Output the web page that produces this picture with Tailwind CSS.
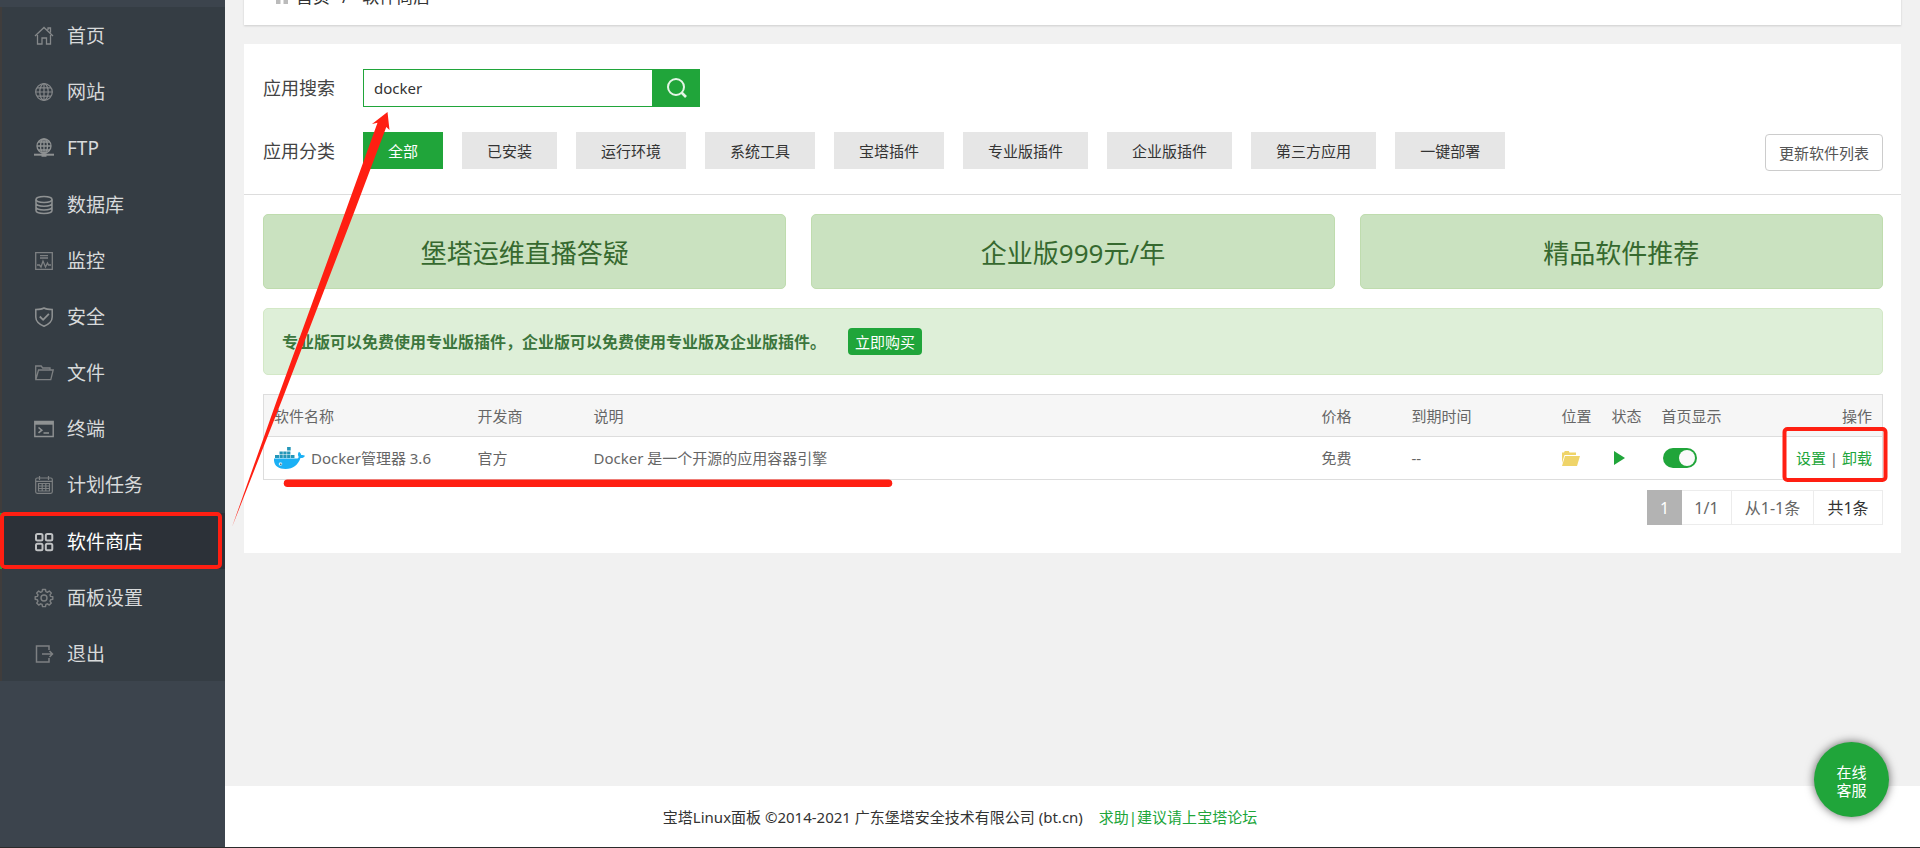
<!DOCTYPE html>
<html lang="zh-CN">
<head>
<meta charset="utf-8">
<meta name="viewport" content="width=device-width, initial-scale=1">
<title>软件商店 - 宝塔Linux面板</title>
<script src="https://cdn.jsdelivr.net/npm/@tailwindcss/browser@4"></script>
</head>
<body class="relative flex min-h-screen flex-col overflow-x-hidden bg-[#f1f1f1] font-['Noto_Sans','Noto_Sans_CJK_SC',sans-serif] text-[15px] leading-5 text-[#333]">
<div class="flex flex-1">
  <!-- Sidebar -->
  <aside class="w-[225px] shrink-0 bg-[#3c444d] pt-[7px]">
    <nav class="grid min-h-[674px] grid-rows-12 text-[19px] leading-6 text-[#d8dadb]">
      <a href="#" class="flex items-center gap-[13px] border-l-2 border-[#403d3c] bg-[#353d44] pt-0.5 pl-8">
        <svg class="size-5 text-[#85888a]" viewBox="0 0 20 20" fill="none" stroke="currentColor" stroke-width="1.3"><path d="M1 10 10 1.5 19 10M14 4V2h2.500v4.500M3.500 9v9H8v-6h4.500v6h4V9"/></svg>
        首页</a>
      <a href="#" class="flex items-center gap-[13px] border-l-2 border-[#403d3c] bg-[#353d44] pt-0.5 pl-8">
        <svg class="size-5 text-[#85888a]" viewBox="0 0 20 20" fill="none" stroke="currentColor" stroke-width="1.200"><circle cx="10" cy="10" r="8.300"/><ellipse cx="10" cy="10" rx="4.200" ry="8.300"/><path d="M10 1.700v16.600M1.700 10h16.600M3 5.800h14M3 14.200h14"/></svg>
        网站</a>
      <a href="#" class="flex items-center gap-[13px] border-l-2 border-[#403d3c] bg-[#353d44] pt-0.5 pl-8">
        <svg class="size-5 text-[#8f9293]" viewBox="0 0 20 20" fill="none" stroke="currentColor" stroke-width="1.300"><circle cx="10" cy="8" r="7"/><ellipse cx="10" cy="8" rx="3.500" ry="7"/><path d="M10 1v14M3 8h14M4.500 4h11M4.500 12h11"/><path d="M0 16.700h20" stroke-width="2"/><path d="M7.500 17h5" stroke-width="3.500"/></svg>
        FTP</a>
      <a href="#" class="flex items-center gap-[13px] border-l-2 border-[#403d3c] bg-[#353d44] pt-0.5 pl-8">
        <svg class="size-5 text-[#8f9293]" viewBox="0 0 20 20" fill="none" stroke="currentColor" stroke-width="1.500"><ellipse cx="10" cy="4.500" rx="8" ry="3"/><path d="M2 4.500v11c0 1.700 3.600 3 8 3s8-1.300 8-3v-11M2 8.200c0 1.700 3.600 3 8 3s8-1.300 8-3M2 12c0 1.700 3.600 3 8 3s8-1.300 8-3"/></svg>
        数据库</a>
      <a href="#" class="flex items-center gap-[13px] border-l-2 border-[#403d3c] bg-[#353d44] pt-0.5 pl-8">
        <svg class="size-5 text-[#7d8082]" viewBox="0 0 20 20" fill="none" stroke="currentColor" stroke-width="1.300"><path d="M1.700 1.700h16.600v16.600H1.700zM6 4.700h8M6 7h8M3 14h2.500l1.500 2 2-6 2.500 6 2-4 1 2H17"/></svg>
        监控</a>
      <a href="#" class="flex items-center gap-[13px] border-l-2 border-[#403d3c] bg-[#353d44] pt-0.5 pl-8">
        <svg class="size-5 text-[#8f9293]" viewBox="0 0 20 20" fill="none" stroke="currentColor" stroke-width="1.500"><path d="M10 1C7.500 2.500 4.500 2.500 1.800 2.500V10c0 4.500 4 7.500 8.200 9.300 4.200-1.800 8.200-4.800 8.200-9.300V2.500C15.500 2.500 12.500 2.500 10 1Z"/><path d="m5.800 9.500 3.300 3.300 5.800-6" stroke-width="1.800"/></svg>
        安全</a>
      <a href="#" class="flex items-center gap-[13px] border-l-2 border-[#403d3c] bg-[#353d44] pt-0.5 pl-8">
        <svg class="size-5 text-[#7d8082]" viewBox="0 0 20 20" fill="none" stroke="currentColor" stroke-width="1.300"><path d="M1.700 16.500V3h5.500l1.500 2H16v2M1.900 16.700 4.500 7h14.700l-2.400 9.700Z"/></svg>
        文件</a>
      <a href="#" class="flex items-center gap-[13px] border-l-2 border-[#403d3c] bg-[#353d44] pt-0.5 pl-8">
        <svg class="size-5 text-[#8f9293]" viewBox="0 0 20 20" fill="none" stroke="currentColor" stroke-width="1.400"><path d="M.8 2.500h18.400v15H.8z"/><path d="M.8 4h18.400" stroke-width="3.400"/><path d="m4.500 8.500 3.300 2.700-3.300 2.700M9.500 14H15" stroke-width="1.600"/></svg>
        终端</a>
      <a href="#" class="flex items-center gap-[13px] border-l-2 border-[#403d3c] bg-[#353d44] pt-0.5 pl-8">
        <svg class="size-5 text-[#7d8082]" viewBox="0 0 20 20" fill="none" stroke="currentColor" stroke-width="1.200"><rect x="1.700" y="3" width="16.600" height="15.300" rx="1.500"/><path d="M5.500 1v4M14.500 1v4M1.700 6.300h16.600M4.500 8.500h11v7.500h-11zM4.500 11h11M4.500 13.500h11M8.200 8.500V16M11.800 8.500V16"/></svg>
        计划任务</a>
      <a href="#" aria-current="page" class="flex items-center gap-[13px] border-l-2 border-[#20a53a] bg-[#2c3138] pt-0.5 pl-8 text-white">
        <svg class="size-5 text-[#bfc1c3]" viewBox="0 0 20 20" fill="none" stroke="currentColor" stroke-width="2"><rect x="2" y="2" width="6.500" height="6.500" rx="1.500"/><rect x="11.800" y="2" width="6.500" height="6.500" rx="1.500"/><rect x="2" y="11.800" width="6.500" height="6.500" rx="1.500"/><rect x="11.800" y="11.800" width="6.500" height="6.500" rx="1.500"/></svg>
        软件商店</a>
      <a href="#" class="flex items-center gap-[13px] border-l-2 border-[#403d3c] bg-[#353d44] pt-0.5 pl-8">
        <svg class="size-5 text-[#7d8082]" viewBox="0 0 20 20" fill="none" stroke="currentColor" stroke-width="1.400" stroke-linejoin="round"><circle cx="10" cy="10" r="3"/><path d="M8.500 1.500h3l.4 2.200 1.500.6 1.900-1.300 2 2-1.300 1.900.6 1.500 2.200.4v2.500l-2.200.4-.6 1.500 1.300 1.900-2 2-1.900-1.300-1.500.6-.4 2.200h-3l-.4-2.200-1.500-.6-1.900 1.300-2-2L4 13.200l-.6-1.500-2.200-.4V8.800l2.200-.4L4 6.900 2.700 5l2-2 1.900 1.300 1.500-.6Z"/></svg>
        面板设置</a>
      <a href="#" class="flex items-center gap-[13px] border-l-2 border-[#403d3c] bg-[#353d44] pt-0.5 pl-8">
        <svg class="size-5 text-[#7d8082]" viewBox="0 0 20 20" fill="none" stroke="currentColor" stroke-width="1.500"><path d="M15 6V2H2.500v16H15v-4M8 10h10.500M15.500 7l3 3-3 3"/></svg>
        退出</a>
    </nav>
  </aside>

  <!-- Main column -->
  <div class="flex min-w-0 flex-1 flex-col">
    <!-- Breadcrumb bar, scrolled partly out of view -->
    <div class="mx-[19px] -mt-8 flex h-[57px] items-center bg-white pl-[30px] text-[17px] leading-6 shadow-[0_1px_2px_rgba(0,0,0,0.15)]">
      <svg class="mr-1.5 size-4 text-[#bbb]" viewBox="0 0 16 16" fill="currentColor"><path d="M8 1 0 8h2v7h4.500v-5h3v5H14V8h2Z"/></svg>
      <a href="#">首页</a><span class="px-3">/</span><span class="pl-0.5">软件商店</span>
    </div>

    <main class="mx-[19px] mt-[19px] bg-white pb-7">
      <section class="border-b border-[#ddd] pt-[25px] pr-[18px] pb-[25px] pl-[19px]">
        <div class="flex items-center">
          <label for="q" class="w-[100px] text-[18px] leading-6 text-[#444]">应用搜索</label>
          <input id="q" type="text" value="docker" class="h-[38px] w-[290px] border border-[#20a53a] px-2.5 outline-none">
          <button aria-label="搜索" class="flex h-[38px] w-[47px] items-center justify-center bg-[#20a53a]">
            <svg class="size-5 text-[#e4f5e6]" viewBox="0 0 20 20" fill="none" stroke="currentColor" stroke-width="2"><circle cx="9" cy="9" r="8"/><path d="m14.500 14.500 4.500 4.500" stroke-width="2.600"/></svg>
          </button>
        </div>
        <div class="mt-[25px] flex items-center">
          <span class="w-[100px] text-[18px] leading-6 text-[#444]">应用分类</span>
          <div class="flex gap-[19px]">
            <button class="h-[37px] bg-[#20a53a] px-[25px] text-white">全部</button>
            <button class="h-[37px] bg-[#e6e6e6] px-[25px]">已安装</button>
            <button class="h-[37px] bg-[#e6e6e6] px-[25px]">运行环境</button>
            <button class="h-[37px] bg-[#e6e6e6] px-[25px]">系统工具</button>
            <button class="h-[37px] bg-[#e6e6e6] px-[25px]">宝塔插件</button>
            <button class="h-[37px] bg-[#e6e6e6] px-[25px]">专业版插件</button>
            <button class="h-[37px] bg-[#e6e6e6] px-[25px]">企业版插件</button>
            <button class="h-[37px] bg-[#e6e6e6] px-[25px]">第三方应用</button>
            <button class="h-[37px] bg-[#e6e6e6] px-[25px]">一键部署</button>
          </div>
          <button class="mt-0.5 -mb-0.5 ml-auto h-[37px] rounded border border-[#ccc] px-[13px] text-[#555]">更新软件列表</button>
        </div>
      </section>

      <div class="pt-[19px] pr-[18px] pl-[19px]">
        <div class="grid grid-cols-3 gap-[25px] text-[26px] leading-8 text-[#36692f]">
          <a href="#" class="flex h-[75px] items-center justify-center rounded-[5px] border border-[#bfdcae] bg-[#cae2c0] pt-0.5">堡塔运维直播答疑</a>
          <a href="#" class="flex h-[75px] items-center justify-center rounded-[5px] border border-[#bfdcae] bg-[#cae2c0] pt-0.5">企业版999元/年</a>
          <a href="#" class="flex h-[75px] items-center justify-center rounded-[5px] border border-[#bfdcae] bg-[#cae2c0] pt-0.5">精品软件推荐</a>
        </div>

        <div class="mt-[19px] flex h-[67px] items-center gap-[22px] rounded-[5px] border border-[#d3e8c6] bg-[#deefd8] pl-[18px] text-[16px] font-bold text-[#3c763d]">
          专业版可以免费使用专业版插件，企业版可以免费使用专业版及企业版插件。
          <button class="h-[27px] rounded bg-[#20a53a] px-[7px] text-[15px] font-normal text-white">立即购买</button>
        </div>

        <table class="mt-[19px] w-full table-fixed border-collapse border border-[#ddd] text-left text-[#666]">
          <colgroup><col class="w-[204px]"><col class="w-[116px]"><col><col class="w-[90px]"><col class="w-[150px]"><col class="w-[50px]"><col class="w-[50px]"><col class="w-[100px]"><col class="w-[131px]"></colgroup>
          <thead>
            <tr class="h-[42px] border-b border-[#ddd] bg-[#f6f6f6] whitespace-nowrap">
              <th class="pl-2.5 font-normal">软件名称</th><th class="pl-2.5 font-normal">开发商</th><th class="pl-2.5 font-normal">说明</th><th class="pl-2.5 font-normal">价格</th><th class="pl-2.5 font-normal">到期时间</th><th class="pl-2.5 font-normal">位置</th><th class="pl-2.5 font-normal">状态</th><th class="pl-2.5 font-normal">首页显示</th><th class="pr-2.5 text-right font-normal">操作</th>
            </tr>
          </thead>
          <tbody>
            <tr class="h-[43px] whitespace-nowrap">
              <td class="pl-2.5"><div class="flex items-center gap-1.5">
                <svg class="h-[22px] w-[31px]" viewBox="0 0 31 22"><path fill="#1ab0f5" d="M0 11.500h22.500c1.500 0 2.200-.8 2-2-.9-1.600-.7-3.200.5-4.700 1.300.8 2 1.800 2.200 3.200 1.300-.2 2.600 0 3.800.7-.8 1.700-2.300 2.500-4.500 2.400C24 18 19.500 22 11.500 22 4 22-.5 18.500 0 11.500Z"/><path fill="#2496b8" d="M1 8h4v3H1zM5.500 8h3.300v3H5.500zM9.300 8h3.300v3H9.300zM13.100 8h3.300v3h-3.300zM16.900 8h3.600v3h-3.600zM5.500 4.500h3.300v3H5.500zM9.300 4.500h3.300v3H9.300zM13.100 4.500h3.300v3h-3.300zM13.100 0h3.600v3.500h-3.600z"/><circle cx="6.500" cy="17" r="1.800" fill="#d9eef7"/><circle cx="6.800" cy="17.200" r=".8" fill="#35586a"/></svg>
                Docker管理器 3.6</div></td>
              <td class="pl-2.5">官方</td>
              <td class="pl-2.5">Docker 是一个开源的应用容器引擎</td>
              <td class="pl-2.5">免费</td>
              <td class="pl-2.5">--</td>
              <td class="pl-2.5"><button aria-label="打开目录" class="block"><svg class="h-[15px] w-[18px]" viewBox="0 0 18 15" fill="#efd469"><path d="M0 12V1.500h2L2.800 0h4l.7 1.500H14V4H2.500Z"/><path d="M3 5h15l-3 10H0Z"/></svg></button></td>
              <td class="pl-3"><button aria-label="运行中" class="block"><svg class="h-[14px] w-[11px]" viewBox="0 0 11 14" fill="#20a53a"><path d="M0 0v14l11-7Z"/></svg></button></td>
              <td class="pl-[11px]"><input type="checkbox" checked aria-label="首页显示" class="flex h-5 w-[34px] appearance-none items-center justify-end rounded-full bg-[#20a53a] pr-0.5 before:size-4 before:rounded-full before:bg-[#fafafa] before:content-['']"></td>
              <td class="pr-2.5 text-right"><a href="#" class="text-[#20a53a]">设置</a> | <a href="#" class="text-[#20a53a]">卸载</a></td>
            </tr>
          </tbody>
        </table>

        <div class="mt-2.5 flex h-[35px] justify-end text-[16px] text-[#666]">
          <span class="flex w-[35px] items-center justify-center bg-[#b3b3b3] text-white">1</span>
          <span class="flex w-[50px] items-center justify-center border-y border-r border-[#ececec]">1/1</span>
          <span class="flex w-[82px] items-center justify-center border-y border-r border-[#ececec]">从1-1条</span>
          <span class="flex w-[69px] items-center justify-center border-y border-r border-[#ececec] text-[#333]">共1条</span>
        </div>
      </div>
    </main>

    <!-- Text is centred on the whole window, so the sidebar's width is padded on the right -->
    <footer class="mt-auto flex h-[61px] items-center justify-center gap-4 bg-white pr-[225px]">
      <span>宝塔Linux面板 ©2014-2021 广东堡塔安全技术有限公司 (bt.cn)</span>
      <a href="#" class="text-[#20a53a]">求助|建议请上宝塔论坛</a>
    </footer>
  </div>
</div>
<div class="h-px bg-[#2b2b2b]"></div>

<!-- Floating support button -->
<button class="absolute right-[31px] bottom-[31px] size-[75px] rounded-full bg-[#20a53a] pt-0.5 leading-[18px] text-white shadow-[0_0_10px_rgba(0,0,0,0.6)]">在线<br>客服</button>

<!-- Red annotation marks -->
<svg class="pointer-events-none absolute top-0 left-0 h-[848px] w-[1920px]" viewBox="0 0 1920 848" fill="none" stroke="#ff1f12" stroke-width="4">
  <rect x="2" y="514" width="218" height="53" rx="3"/>
  <rect x="1784.500" y="429" width="101" height="51" rx="3"/>
  <path d="M287.500 483.300h601" stroke-width="7.500" stroke-linecap="round"/>
  <path d="M387.500 112 372 124l5.500-1.200L346 210 277 400 232 527l50-127 73-190 31.300-83 3.200 3Z" fill="#ff1f12" stroke="none"/>
</svg>
</body>
</html>
